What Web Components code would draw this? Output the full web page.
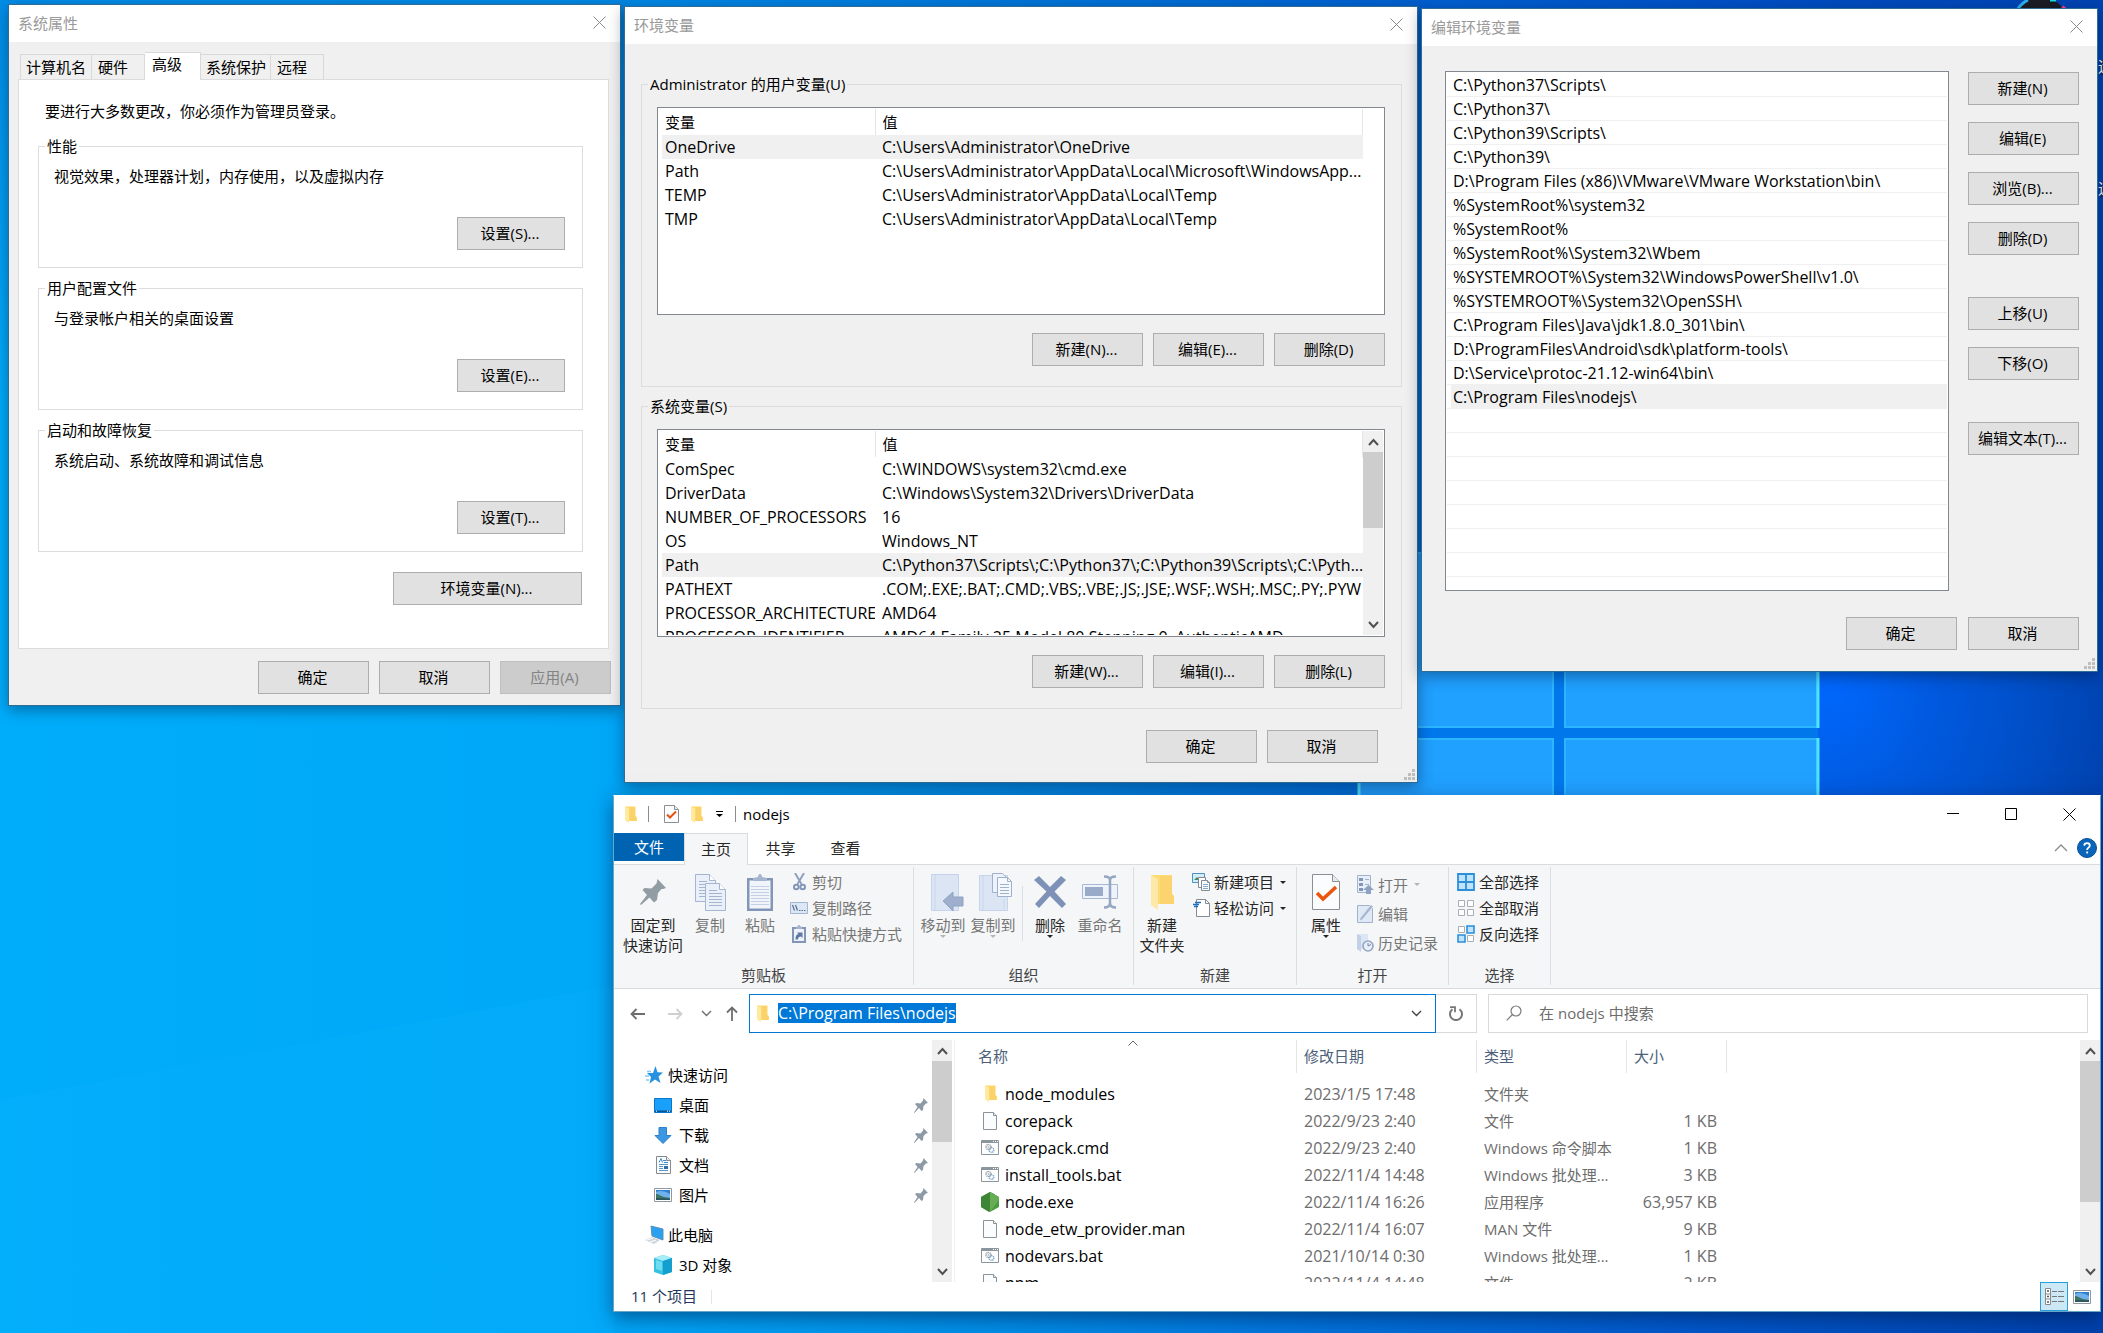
<!DOCTYPE html>
<html lang="zh-CN">
<head>
<meta charset="utf-8">
<title>nodejs</title>
<style>
html, body { margin: 0; height: 100%; }
body { font: 15px/20px "Open Sans", "Noto Sans CJK SC", sans-serif; color: #000; overflow: hidden; }
</style>
</head>
<body>
<desk-top>
  <desk-label style="top:56px">远程</desk-label>
  <desk-label style="top:178px">远程</desk-label>

  <win-dialog caption="系统属性" style="left:8px;top:4px;width:613px">
    <system-properties></system-properties>
  </win-dialog>

  <win-dialog caption="环境变量" grip style="left:624px;top:6px;width:794px">
    <env-variables></env-variables>
  </win-dialog>

  <win-dialog caption="编辑环境变量" grip style="left:1421px;top:8px;width:677px">
    <env-editor></env-editor>
  </win-dialog>

  <file-explorer></file-explorer>
</desk-top>

<script>
/* ---------- icons ---------- */
const paper = (x, y, w, h, c, f = 4) => `<path d="M${x} ${y}h${w - f}l${f} ${f}v${h - f}h${-w}z" fill="#fbfcfd" stroke="${c}"/><path d="M${x + w - f} ${y}v${f}h${f}" fill="#e6eaee" stroke="${c}"/>`;
const win = `<path d="M.5 1.5h17v14H.5z" fill="#fff" stroke="#8b959c"/><path d="M.5 2h17v2H.5z" fill="#8b959c"/><path d="M12 2.500h1m1 0h1m1 0h1" stroke="#fff"/><circle cx="7.500" cy="8" r="2.500" fill="none" stroke="#8e979d" stroke-width="1.500" stroke-dasharray="1 .6"/><circle cx="10.500" cy="11" r="2.300" fill="none" stroke="#7da7c6" stroke-width="1.500" stroke-dasharray="1 .6"/><circle cx="7.500" cy="8" r="1" fill="#b9c2c8"/>`;
const pic = `<path d="M.5 .5h17v13H.5z" fill="#fff" stroke="#8f989e"/><path d="M2 2h14v10H2z" fill="#6fb1ea"/><path d="M2 4c4-2 9-1 14 2v-4H2z" fill="#2f7fd0"/><path d="M2 6c3 0 4 2 8 3l6 1v2H2z" fill="#3f7362"/><path d="M2 10l14 .5V12H2z" fill="#2b5560"/>`;
const ICONS = {
  close: [13, 13, '<path d="M.5 .5l12 12M12.500 .5l-12 12" stroke="currentColor" fill="none"/>'],
  min: [12, 12, '<path d="M0 5.500h12" stroke="currentColor"/>'],
  max: [12, 12, '<path d="M.5 .5h11v11H.5z" stroke="currentColor" fill="none"/>'],
  down: [11, 7, '<path d="M1 1l4.500 4.500L10 1" stroke="currentColor" stroke-width="1.400" fill="none"/>'],
  scrollUp: [11, 8, '<path d="M1 7l4.500-5L10 7" stroke="currentColor" stroke-width="2" fill="none"/>'],
  scrollDown: [11, 8, '<path d="M1 1l4.500 5L10 1" stroke="currentColor" stroke-width="2" fill="none"/>'],
  sort: [10, 6, '<path d="M.5 5.500L5 1l4.500 4.500" stroke="currentColor" fill="none"/>'],
  collapse: [14, 8, '<path d="M1 7l6-6 6 6" stroke="currentColor" stroke-width="1.300" fill="none"/>'],
  caret: [6, 3, '<path d="M0 0h6L3 3z" fill="currentColor"/>'],
  custom: [7, 6, '<path d="M0 .5h7" stroke="#000"/><path d="M0 3h7L3.500 6z" fill="#000"/>'],
  back: [15, 12, '<path d="M15 6H1.500M6.500 1L1.500 6l5 5" stroke="currentColor" stroke-width="1.800" fill="none"/>'],
  forward: [15, 12, '<path d="M0 6h13.500M8.500 1l5 5-5 5" stroke="currentColor" stroke-width="1.800" fill="none"/>'],
  upArrow: [12, 15, '<path d="M6 15V1.500M1 6.500l5-5 5 5" stroke="currentColor" stroke-width="1.800" fill="none"/>'],
  refresh: [14, 15, '<path d="M10.500 3.200A6 6 0 1 1 3.500 3.200" stroke="#777" stroke-width="2" fill="none"/><path d="M1 1.200h5v5" stroke="#777" stroke-width="1.800" fill="none"/>'],
  search: [16, 16, '<circle cx="10" cy="6" r="5" fill="none" stroke="#7b7b7b" stroke-width="1.200"/><path d="M6.500 9.500L.7 15.300" stroke="#7b7b7b" stroke-width="1.200"/>'],
  grip: [11, 11, '<path d="M8 0h3v3H8zM4 4h3v3H4zM8 4h3v3H8zM0 8h3v3H0zM4 8h3v3H4zM8 8h3v3H8z" fill="#bfbfbf"/>'],
  help: [20, 20, '<circle cx="10" cy="10" r="9.500" fill="#0a64ba" stroke="#084f93"/><path d="M7.200 7.600c.2-3.300 5.600-3.200 5.600 0 0 2-2.700 2.200-2.700 4.400" fill="none" stroke="#fff" stroke-width="1.800"/><path d="M9.200 13.500h1.900v1.900H9.200z" fill="#fff"/>'],
  folder: [13, 17, '<path d="M1 .5h10.500v9.500l1.500 1.500V15H5z" fill="#ffd868"/><path d="M1 .5l4 2V17l-4-2.500z" fill="#ffeaa3"/><path d="M6 1h5v9l1 1.500V15H6z" fill="#fbd16a"/>'],
  props: [15, 18, paper(.5, .5, 14, 17, '#8b8f94', 4) + '<path d="M3 9.500l3 3 6-6" stroke="#e8500f" stroke-width="2" fill="none"/>'],
  pin: [26, 26, '<path d="M17.500 0L26 9l-3 1-1.500 0-3.500 4-1 7-3 2.500-4.500-5L1 26l-1-1 7-9-4.500-5 2-2 7 .500 5-5z" fill="#919ca3"/>'],
  pinSmall: [14, 15, '<path d="M9.500 0L14 5l-2 .500-2.500 2.500-.5 4-1.500 1-2.500-3L.500 15 0 14.500l3.500-5.500-2.500-3 1.500-1 4 .500 2.500-3z" fill="#8d9aa6"/>'],
  copy: [31, 37, ((g) => g(0, 0) + g(10, 9))((x, y) => `<path d="M${x + .5} ${y + .5}h14l6 6v21h-20z" fill="#eaf0fa" stroke="#a5b5d0"/><path d="M${x + 14.5} ${y + .5}v6h6" fill="#fff" stroke="#a5b5d0"/><path d="M${x + 4} ${y + 7.5}h8m-8 3h13m-13 3h13m-13 3h13m-13 3h13m-13 3h13" stroke="#a5b5d0"/>`)],
  paste: [26, 37, '<path d="M0 4h26v33H0z" fill="#8296b8"/><path d="M2.500 6.500h21v28h-21z" fill="#f1f5fb"/><path d="M4 12.500h18M4 15.500h18M4 18.500h18M4 21.500h18M4 24.500h18M4 27.500h18M4 30.500h18" stroke="#c5d0e4"/><path d="M6 7V4l5-1c0-4 4-4 4 0l5 1v3z" fill="#a6b5cf"/>'],
  cut: [13, 18, '<path d="M2 0l6.500 11M11 0L4.500 11" stroke="#8fa1bf" stroke-width="2" fill="none"/><circle cx="3.300" cy="14" r="2.300" fill="none" stroke="#8296b8" stroke-width="2"/><circle cx="9.700" cy="14" r="2.300" fill="none" stroke="#8296b8" stroke-width="2"/>'],
  path: [18, 12, '<path d="M.5 .5h17v11H.5z" fill="#dce7f6" stroke="#a5b5d0"/><path d="M2.500 3l2 5.500M5.500 3l2 5.500M9 8.500h1.500m1 0H13m1 0h1.500" stroke="#56708f" stroke-width="1.200"/>'],
  link: [14, 18, '<path d="M0 2h14v16H0z" fill="#8296b8"/><path d="M2 4h10v12H2z" fill="#eef3fb"/><path d="M4 4V2l2-1c0-2 2-2 2 0l2 1v2z" fill="#a6b5cf"/><path d="M3.500 14.500c0-4 1-5 3-5.500L5 7.500h5.500V13L9 11.500c-2 0-3 1-3 3z" fill="#5f78a3"/>'],
  moveTo: [41, 37, '<g transform="translate(8)"><path d="M.5 .5h27v36H.5z" fill="#dbe5f4" stroke="#c6d3e8"/><path d="M4 1v35" stroke="#c9d6ea"/><path d="M12 27l10-9v5h10v9H22v5z" fill="#9dafcc" stroke="#8fa3c3"/></g>'],
  copyTo: [40, 38, '<g transform="translate(6)"><path d="M.5 2.500h28v35H.5z" fill="#dbe5f4" stroke="#c6d3e8"/><path d="M4 3v34M25 26v10" stroke="#c9d6ea"/><path d="M13.500 .5h10l4 4v15h-14z" fill="#eef3fb" stroke="#9fb0cd"/><path d="M18.500 4.500h10l4 4v15h-14z" fill="#f5f8fd" stroke="#9fb0cd"/><path d="M28.500 4.500v4h4M21 11.500h9m-9 3h9m-9 3h9m-9 3h9" stroke="#9fb0cd" fill="none"/></g>'],
  del: [32, 32, '<path d="M5 0l11 11L27 0l5 4-11.500 11.500L32 28l-4 4-12-12L5 32l-4-4 11.500-12.500L0 4z" fill="#7e92b7"/>'],
  rename: [36, 34, '<path d="M.5 9.500h35v14H.500z" fill="#edf2fb" stroke="#a9b8d3"/><path d="M3 12h18v9H3z" fill="#9aabc9"/><path d="M22 1.500c4 0 6 1 6 3.500v23c0 3-2 4.500-6 4.500M34 1.500c-4 0-6 1-6 3.500v23c0 3 2 4.500 6 4.500" stroke="#94a6c4" stroke-width="2.500" fill="none"/>'],
  bigFolder: [25, 35, '<path d="M1 0h21v19l2 2v8H8z" fill="#ffdb74"/><path d="M1 0l7 4v31l-7-5z" fill="#ffe9a6"/><path d="M10 1h12v18l2 3v7H10z" fill="#fbd36f"/>'],
  newItem: [18, 18, '<path d="M.5 .5h12v9H.500z" fill="#d6ecfa" stroke="#4c93c4"/><path d="M2 7l3-3 3 3z" fill="#3f8f64"/>' + '<path d="M6.500 4.500h7v10h-7z" fill="#fff" stroke="#858b90"/>' + paper(9.5, 7.5, 8, 10, '#858b90', 2) + '<path d="M11 11.500h5m-5 2h5m-5 2h5" stroke="#7fa9d8"/>'],
  easy: [17, 18, '<path d="M3.500 .500h9l4 4v13h-13z" fill="#fff" stroke="#858b90"/><path d="M12.500 .500v4h4" fill="none" stroke="#858b90"/><path d="M2 3.500h6M0 5.500h6M1 7.500h4" stroke="#1c6fb8" stroke-width="1.300"/>'],
  bigProps: [29, 37, paper(.5, .5, 27, 35, '#8b8f94', 7) + '<path d="M5 19l6 6 13-12" stroke="#ea560d" stroke-width="3.500" fill="none"/>'],
  open: [17, 19, '<path d="M.5 .500h13v17H.500z" fill="#e9eff9" stroke="#a3b2cc"/><path d="M2 3h4v3H2zM2 8h4v3H2zM2 13h4v3H2z" fill="#8296b8"/><path d="M8 4.500h4m-4 5h4" stroke="#a3b2cc"/><path d="M11.500 10l5.500 5h-3v4H9v-4H6z" fill="#8fa2c2"/>'],
  edit: [17, 18, '<path d="M.5 .500h12l3 3v14H.500z" fill="#dfe8f5" stroke="#a3b2cc"/><path d="M16 1.500L5 14.500l-2 1 .500-2.500L14 0z" fill="#a7b7d2"/>'],
  history: [18, 19, '<path d="M1 1h11v15H5z" fill="#dbe5f4"/><path d="M1 1l4 2v16l-4-3z" fill="#c3d1e7"/><circle cx="12" cy="13" r="5" fill="#e9eff9" stroke="#93a5c4" stroke-width="1.600"/><path d="M12 10v3l3-1.500" stroke="#6f86ae" fill="none"/>'],
  selAll: [18, 18, '<path d="M1 1h16v16H1zM9 1v16M1 9h16" fill="#bfe3fb" stroke="#2c8fdc" stroke-width="1.800"/>'],
  selNone: [18, 18, '<path d="M1.500 1.500h6v6h-6zM10.500 1.500h6v6h-6zM1.500 10.500h6v6h-6zM10.500 10.500h6v6h-6z" fill="#fff" stroke="#a9aeb3"/>'],
  selInv: [18, 18, '<path d="M1.500 1.500h6v6h-6zM10.500 10.500h6v6h-6z" fill="#fff" stroke="#a9aeb3"/><path d="M10 1h7v7h-7zM1 10h7v7H1z" fill="#bfe3fb" stroke="#2c8fdc" stroke-width="1.600"/>'],
  star: [18, 18, '<path d="M10.500 0l2 6.200 5.500.3-4.500 4 2 6.500-5.500-3.500-5.500 4 1.500-6.500-4-4h6z" fill="#2492e0"/><path d="M2 5.500h4M0 10h4M1 14h3" stroke="#8cc8f2" stroke-width="1.300"/>'],
  desktop: [18, 15, '<path d="M.5 .500h17v14H.500z" fill="#18a0fb" stroke="#0b76c9"/><path d="M1 12.500h16v1.500H1z" fill="#075795"/><path d="M2 13.200h1m10 0h1m1 0h1" stroke="#fff"/>'],
  download: [18, 17, '<path d="M5 .5h7.500v8H17L9 16.500 1 8.500h4z" fill="#3b97e3" stroke="#2c7fc8"/>'],
  doc: [15, 18, paper(.5, .5, 14, 17, '#858b90', 4) + '<path d="M3 6.500l2-4 1.500 4M7 4.500h3m-2 2h4" stroke="#3b8bd0" fill="none"/><path d="M3 8.500h9M3 10.500h4m-4 2h4m-4 2h9" stroke="#5b96c4"/><path d="M8 10h4v3H8z" fill="#2f6ea4"/>'],
  pictures: [18, 14, pic],
  pc: [20, 20, '<path d="M6 1l12 3v11L7 11z" fill="#2aa0ee" stroke="#5c93b8"/><path d="M0 15l7-3 8 3-6 4z" fill="#cfd6db"/><path d="M2 15l6-2m-3 4l6-2" stroke="#fff"/>'],
  cube: [18, 20, '<path d="M0 3l9-3 9 3v14l-9 3-9-3z" fill="#35c3e0"/><path d="M0 3l9 3 9-3-9-3z" fill="#a8ecf7"/><path d="M9 6l9-3v14l-9 3z" fill="#159fce"/><path d="M2 5l6 2v9l-6-2z" fill="#6fdcf0"/>'],
  file: [15, 18, paper(.5, .5, 13, 17, '#8b9298', 3)],
  script: [18, 17, win],
  node: [18, 20, '<path d="M9 0l9 5v10l-9 5-9-5V5z" fill="#4d9a41"/><path d="M9 0l5 2.500L8 20 0 15V5z" fill="#3d8636"/><path d="M9 0l9 5v3L9 20z" fill="#66ad55"/>'],
  details: [19, 17, '<path d="M.5 .500h5v16h-5zM.5 6h5M.500 11h5" fill="#fff" stroke="#888"/><path d="M2 3h2M2 8.500h2M2 14h2" stroke="#555" stroke-width="1.500"/><path d="M7 3.500h5m1 0h6M7 8.500h5m1 0h6M7 13.500h5m1 0h6" stroke="#777"/>']
};

function define(name, css, html, setup) {
  const template = document.createElement('template');
  customElements.define(name, class extends HTMLElement {
    connectedCallback() {
      if (this.shadowRoot) return;
      const root = this.attachShadow({ mode: 'open' });
      template.innerHTML = `<style>*{box-sizing:border-box}${css}</style>${typeof html === 'function' ? html(this) : html}`;
      root.append(template.content.cloneNode(true));
      if (setup) setup(root, this);
    }
  });
}

define('ui-icon', ':host{display:inline-flex;flex:none}svg{display:block}', el => {
  const [w, h, body] = ICONS[el.getAttribute('name')];
  return `<svg width="${w}" height="${h}" viewBox="0 0 ${w} ${h}" aria-hidden="true">${body}</svg>`;
});

define('push-button', `
  :host{display:inline-flex;width:111px;height:33px;flex:none}
  button{flex:1;font:inherit;color:#000;background:#e1e1e1;border:1px solid #adadad;padding:0 2px 2px 0;white-space:nowrap}
  button:disabled{background:#ccc;border-color:#bfbfbf;color:#838383}`,
  el => `<button type="button" ${el.hasAttribute('disabled') ? 'disabled' : ''}><slot></slot></button>`);

define('scroll-bar', `
  :host{display:flex;flex-direction:column;justify-content:space-between;width:20px;flex:none;background:#f0f0f0;color:#505050}
  button{height:21px;border:0;padding:0;background:none;color:inherit;display:grid;place-items:center}
  .track{flex:1}.thumb{height:var(--thumb);background:#cdcdcd}`,
  '<button type="button" aria-label="向上"><ui-icon name="scrollUp"></ui-icon></button><div class="track"><div class="thumb"></div></div><button type="button" aria-label="向下"><ui-icon name="scrollDown"></ui-icon></button>');

define('desk-label', ':host{position:absolute;right:-25px;color:#fff;text-shadow:1px 1px 2px #000;white-space:nowrap}', '<slot></slot>');

define('desk-top', `
  :host{display:block;position:relative;width:100%;height:100vh;overflow:hidden;background:
    radial-gradient(circle at 1830px 690px,rgba(0,104,255,.95) 0,rgba(0,98,245,.6) 110px,rgba(0,80,220,0) 300px),
    linear-gradient(180deg,rgba(0,70,190,.3) 0,rgba(0,80,200,0) 30%),
    linear-gradient(90deg,#00adfb 0,#00a8f8 28%,#008ee8 47%,#0074dc 62%,#0058cc 80%,#0041ac 100%)}
  .wall{position:absolute;inset:0}`,
  `<svg class="wall" width="100%" height="100%" aria-hidden="true">
    <path d="M0 1100L614 985V1333H0z" fill="#19b8ff" opacity=".13"/>
    <path d="M1359 553h459v366h-459z" fill="#0078ec"/>
    <g fill="#20a0ff" stroke="#2bb6ff" stroke-width="2"><path d="M1359 553h194v174h-194zM1565 553h252v174h-252zM1359 739h194v180h-194zM1565 739h252v180h-252z"/></g>
    <path d="M1818 552v176m0 10v180M1359 738v180" stroke="#4fe4ff" stroke-width="3"/>
    <circle cx="2041" cy="24" r="27" fill="#1b1b22"/><path d="M2016 12a27 27 0 0 1 12-12" stroke="#29b2f4" stroke-width="3" fill="none"/><path d="M2062 7l5 4" stroke="#ff3e8f" stroke-width="4"/><path d="M2050 0h6" stroke="#17e0e0" stroke-width="3"/>
  </svg><slot></slot>`);

define('win-dialog', `
  :host{position:absolute;display:flex;flex-direction:column;background:#f0f0f0;border:1px solid #2f6d94;box-shadow:0 4px 14px rgba(0,20,50,.42);box-sizing:border-box}
  header{display:flex;justify-content:space-between;align-items:center;height:37px;padding:0 14px 2px 9px;background:#fff;color:#999}
  h2{font:inherit;margin:0}
  header button{border:0;padding:0;background:none;color:#8a8a8a;display:grid}
  .grip{position:absolute;right:2px;bottom:2px}`,
  el => `<header><h2>${el.getAttribute('caption')}</h2><button type="button" aria-label="关闭"><ui-icon name="close"></ui-icon></button></header><slot></slot>${el.hasAttribute('grip') ? '<ui-icon class="grip" name="grip"></ui-icon>' : ''}`);

define('group-box', `
  :host{display:block}
  fieldset{margin:0;padding:0;border:1px solid #dcdcdc;min-width:0}
  legend{margin-left:6px;padding:0 2px}`,
  el => `<fieldset><legend>${el.getAttribute('caption')}</legend><slot></slot></fieldset>`);

const settings = (title, text, key) => `<group-box caption="${title}"><div class="setting"><p>${text}</p><push-button>设置(${key})...</push-button></div></group-box>`;
define('system-properties', `
  :host{display:block;padding:10px 9px 11px 9px}
  nav{display:flex;align-items:flex-end;height:27px;padding-left:2px}
  nav button{font:inherit;height:25px;padding:0 4px 0 5px;border:1px solid #d9d9d9;border-left-width:0;border-bottom:0;background:#f0f0f0;text-align:left;white-space:nowrap}
  nav button:first-child{border-left-width:1px;padding-right:5px}
  nav .wide{padding:0 16px 0 6px}
  nav .on{height:28px;margin-bottom:-1px;background:#fff;padding:0 18px 5px 7px;position:relative}
  section{display:flex;flex-direction:column;margin-right:2px;padding:21px 25px 43px 19px;background:#fff;border:1px solid #dcdcdc}
  p{margin:0}.lead{padding:0 7px 15px}
  .groups{display:flex;flex-direction:column;gap:10px}
  .setting{display:flex;flex-direction:column;gap:31px;padding:10px 17px 17px 15px}
  .setting push-button{width:108px;align-self:flex-end}
  .env{width:189px;align-self:flex-end;margin:20px 1px 0 0}
  footer{display:flex;justify-content:flex-end;gap:10px;padding-top:12px}`,
  `<nav><button type="button">计算机名</button><button type="button" class="wide">硬件</button><button type="button" class="on">高级</button><button type="button">系统保护</button><button type="button" class="wide">远程</button></nav>
  <section><p class="lead">要进行大多数更改，你必须作为管理员登录。</p>
  <div class="groups">${settings('性能', '视觉效果，处理器计划，内存使用，以及虚拟内存', 'S')}${settings('用户配置文件', '与登录帐户相关的桌面设置', 'E')}${settings('启动和故障恢复', '系统启动、系统故障和调试信息', 'T')}</div>
  <push-button class="env">环境变量(N)...</push-button></section>
  <footer><push-button>确定</push-button><push-button>取消</push-button><push-button disabled>应用(A)</push-button></footer>`);

const VARS = {
  user: { selected: 0, rows: [
    ['OneDrive', 'C:\\Users\\Administrator\\OneDrive'],
    ['Path', 'C:\\Users\\Administrator\\AppData\\Local\\Microsoft\\WindowsApp...'],
    ['TEMP', 'C:\\Users\\Administrator\\AppData\\Local\\Temp'],
    ['TMP', 'C:\\Users\\Administrator\\AppData\\Local\\Temp']] },
  system: { selected: 4, rows: [
    ['ComSpec', 'C:\\WINDOWS\\system32\\cmd.exe'],
    ['DriverData', 'C:\\Windows\\System32\\Drivers\\DriverData'],
    ['NUMBER_OF_PROCESSORS', '16'],
    ['OS', 'Windows_NT'],
    ['Path', 'C:\\Python37\\Scripts\\;C:\\Python37\\;C:\\Python39\\Scripts\\;C:\\Pyth...'],
    ['PATHEXT', '.COM;.EXE;.BAT;.CMD;.VBS;.VBE;.JS;.JSE;.WSF;.WSH;.MSC;.PY;.PYW'],
    ['PROCESSOR_ARCHITECTURE', 'AMD64'],
    ['PROCESSOR_IDENTIFIER', 'AMD64 Family 25 Model 80 Stepping 0, AuthenticAMD']] }
};
define('variable-list', `
  :host{display:flex;height:208px;background:#fff;border:1px solid #828790;padding:1px 1px 1px 4px}
  .view{flex:1;overflow:hidden}
  table{table-layout:fixed;width:100%;border-collapse:collapse}
  th,td{font-weight:400;text-align:left;padding:0 0 0 3px;white-space:nowrap;overflow:hidden}
  th{height:26px;border-right:1px solid #e5e5e5}td{height:24px;font-size:16px}
  th:first-child{width:213px}
  th+th,td+td{padding-left:7px}
  .sel{background:#f0f0f0}
  .blank{width:20px}scroll-bar{--thumb:76px}`,
  el => {
    const { selected, rows } = VARS[el.getAttribute('source')];
    return `<div class="view"><table><thead><tr><th scope="col">变量</th><th scope="col">值</th></tr></thead><tbody>${rows.map((r, i) => `<tr${i === selected ? ' class="sel"' : ''}><td>${r[0]}</td><td>${r[1]}</td></tr>`).join('')}</tbody></table></div>${el.hasAttribute('scroll') ? '<scroll-bar></scroll-bar>' : '<div class="blank"></div>'}`;
  });

define('env-variables', `
  :host{display:flex;flex-direction:column;gap:9px;padding:30px 15px 19px 16px}
  .box{display:flex;flex-direction:column;gap:18px;padding:13px 16px 20px 15px}
  .row{display:flex;justify-content:flex-end;gap:10px}
  .end{padding:12px 24px 0 0}`,
  `<group-box caption="Administrator 的用户变量(U)"><div class="box"><variable-list source="user"></variable-list><div class="row"><push-button>新建(N)...</push-button><push-button>编辑(E)...</push-button><push-button>删除(D)</push-button></div></div></group-box>
  <group-box caption="系统变量(S)"><div class="box"><variable-list source="system" scroll></variable-list><div class="row"><push-button>新建(W)...</push-button><push-button>编辑(I)...</push-button><push-button>删除(L)</push-button></div></div></group-box>
  <div class="row end"><push-button>确定</push-button><push-button>取消</push-button></div>`);

const PATHS = ['C:\\Python37\\Scripts\\', 'C:\\Python37\\', 'C:\\Python39\\Scripts\\', 'C:\\Python39\\', 'D:\\Program Files (x86)\\VMware\\VMware Workstation\\bin\\', '%SystemRoot%\\system32', '%SystemRoot%', '%SystemRoot%\\System32\\Wbem', '%SYSTEMROOT%\\System32\\WindowsPowerShell\\v1.0\\', '%SYSTEMROOT%\\System32\\OpenSSH\\', 'C:\\Program Files\\Java\\jdk1.8.0_301\\bin\\', 'D:\\ProgramFiles\\Android\\sdk\\platform-tools\\', 'D:\\Service\\protoc-21.12-win64\\bin\\', 'C:\\Program Files\\nodejs\\'];
define('env-editor', `
  :host{display:flex;flex-direction:column;gap:26px;padding:25px 18px 21px 23px}
  main{display:flex;gap:19px}
  .list{flex:1;height:520px;padding:1px;border:1px solid #828790;background:#fff}
  ul{list-style:none;margin:0;padding:0;height:100%;background:repeating-linear-gradient(#fff 0 23px,#f0f0f0 23px 24px)}
  li{height:24px;line-height:24px;font-size:16px;margin-left:4px;padding-left:2px;white-space:nowrap}
  .sel{background:#f0f0f0}
  .side{display:flex;flex-direction:column;gap:17px;padding-top:1px}
  .far{margin-top:25px}
  footer{display:flex;justify-content:flex-end;gap:11px}`,
  `<main><div class="list"><ul>${PATHS.map((p, i) => `<li${i === PATHS.length - 1 ? ' class="sel"' : ''}>${p}</li>`).join('')}</ul></div>
  <div class="side"><push-button>新建(N)</push-button><push-button>编辑(E)</push-button><push-button>浏览(B)...</push-button><push-button>删除(D)</push-button><push-button class="far">上移(U)</push-button><push-button>下移(O)</push-button><push-button class="far">编辑文本(T)...</push-button></div></main>
  <footer><push-button>确定</push-button><push-button>取消</push-button></footer>`);

/* ---------- explorer ---------- */
define('ribbon-group', `
  :host{display:flex;flex-direction:column;justify-content:space-between;border-right:1px solid #dcdfe2;box-sizing:border-box}
  .body{display:flex;align-items:flex-start;padding-left:var(--pad)}
  .name{text-align:center;color:#444}`,
  el => `<div class="body"><slot></slot></div><div class="name">${el.getAttribute('caption')}</div>`);

define('ribbon-large', `
  :host{display:block;flex:none;width:50px}
  button{width:100%;border:0;background:none;font:inherit;color:#262626;padding:5px 0 0;display:flex;flex-direction:column;align-items:center;white-space:nowrap}
  button:disabled{color:#767676}
  .pic{height:40px;display:grid;place-items:center;margin-bottom:3px}
  .caret{color:#262626}button:disabled .caret{color:#b5b5b5}`,
  el => `<button type="button" ${el.hasAttribute('off') ? 'disabled' : ''}><span class="pic"><ui-icon name="${el.getAttribute('icon')}"></ui-icon></span><slot></slot>${el.hasAttribute('menu') ? '<ui-icon class="caret" name="caret"></ui-icon>' : ''}</button>`);

define('ribbon-small', `
  :host{display:block}
  button{border:0;background:none;font:inherit;color:#262626;height:var(--row,26px);padding:0;display:flex;align-items:center;white-space:nowrap}
  button:disabled{color:#767676}
  .pic{width:18px;display:grid;place-items:center;margin-right:4px}
  .caret{margin-left:6px}button:disabled .caret{color:#b5b5b5}`,
  el => `<button type="button" ${el.hasAttribute('off') ? 'disabled' : ''}><span class="pic"><ui-icon name="${el.getAttribute('icon')}"></ui-icon></span><slot></slot>${el.hasAttribute('menu') ? '<ui-icon class="caret" name="caret"></ui-icon>' : ''}</button>`);

define('explorer-ribbon', `
  :host{display:flex;height:125px;padding:2px 0 3px;background:#f5f6f7;border:solid #dadbdc;border-width:1px 0}
  .stack{display:flex;flex-direction:column;padding-top:2px}
  .gap{padding-left:5px}
  .tall{--row:29px;padding:3px 0 0 5px}
  .sep{width:1px;height:55px;margin:19px 2px 0 4px;background:#dcdfe2}
  .clip{width:300px;--pad:7px}.org{width:220px;--pad:4px}.new{width:163px;--pad:3px}.open{width:152px;--pad:4px}.pick{width:102px;--pad:8px}
  .w64{width:64px}`,
  `<ribbon-group class="clip" caption="剪贴板"><ribbon-large class="w64" icon="pin">固定到<br>快速访问</ribbon-large><ribbon-large off icon="copy">复制</ribbon-large><ribbon-large off icon="paste">粘贴</ribbon-large><div class="stack gap"><ribbon-small off icon="cut">剪切</ribbon-small><ribbon-small off icon="path">复制路径</ribbon-small><ribbon-small off icon="link">粘贴快捷方式</ribbon-small></div></ribbon-group>
  <ribbon-group class="org" caption="组织"><ribbon-large off menu icon="moveTo">移动到</ribbon-large><ribbon-large off menu icon="copyTo">复制到</ribbon-large><div class="sep"></div><ribbon-large menu icon="del">删除</ribbon-large><ribbon-large off icon="rename">重命名</ribbon-large></ribbon-group>
  <ribbon-group class="new" caption="新建"><ribbon-large icon="bigFolder">新建<br>文件夹</ribbon-large><div class="stack gap"><ribbon-small menu icon="newItem">新建项目</ribbon-small><ribbon-small menu icon="easy">轻松访问</ribbon-small></div></ribbon-group>
  <ribbon-group class="open" caption="打开"><ribbon-large menu icon="bigProps">属性</ribbon-large><div class="stack tall"><ribbon-small off menu icon="open">打开</ribbon-small><ribbon-small off icon="edit">编辑</ribbon-small><ribbon-small off icon="history">历史记录</ribbon-small></div></ribbon-group>
  <ribbon-group class="pick" caption="选择"><div class="stack"><ribbon-small icon="selAll">全部选择</ribbon-small><ribbon-small icon="selNone">全部取消</ribbon-small><ribbon-small icon="selInv">反向选择</ribbon-small></div></ribbon-group>`);

define('nav-item', `
  :host{display:block}
  a{display:flex;align-items:center;height:30px;padding:0 4px 0 31px;color:#000;text-decoration:none}
  .pic{width:18px;display:grid;place-items:center;margin-right:5px}
  .sub{padding-left:40px}.sub .pic{margin-right:7px}
  .pin{margin-left:auto}`,
  el => `<a href="#" class="${el.hasAttribute('sub') ? 'sub' : ''}"><span class="pic"><ui-icon name="${el.getAttribute('icon')}"></ui-icon></span><slot></slot>${el.hasAttribute('pinned') ? '<ui-icon class="pin" name="pinSmall"></ui-icon>' : ''}</a>`);

const FILES = [
  ['folder', 'node_modules', '2023/1/5 17:48', '文件夹', ''],
  ['file', 'corepack', '2022/9/23 2:40', '文件', '1 KB'],
  ['script', 'corepack.cmd', '2022/9/23 2:40', 'Windows 命令脚本', '1 KB'],
  ['script', 'install_tools.bat', '2022/11/4 14:48', 'Windows 批处理...', '3 KB'],
  ['node', 'node.exe', '2022/11/4 16:26', '应用程序', '63,957 KB'],
  ['file', 'node_etw_provider.man', '2022/11/4 16:07', 'MAN 文件', '9 KB'],
  ['script', 'nodevars.bat', '2021/10/14 0:30', 'Windows 批处理...', '1 KB'],
  ['file', 'npm', '2022/11/4 14:48', '文件', '2 KB']];
define('file-list', `
  :host{display:block;position:relative;flex:1;overflow:hidden}
  table{table-layout:fixed;width:100%;border-collapse:collapse;color:#6d6d6d}
  th,td{font-weight:400;text-align:left;padding:0;white-space:nowrap;overflow:hidden}
  th{height:40px;vertical-align:top;color:#4c607a}
  th div{height:33px;padding:6px 0 0 7px;border-right:1px solid #e5e5e5}
  th:first-child div{padding-left:23px}
  th:last-child div{border:0}
  td{height:27px;padding-left:7px}
  td:first-child{padding-left:26px}
  .name{display:flex;align-items:center;gap:6px;color:#000;font-size:16px}
  .pic{width:18px;height:20px;display:grid;place-items:center}
  td.date,td.size{font-size:16px}
  td.size{text-align:right;padding-right:10px}
  .sort{position:absolute;left:173px;top:0;color:#666}`,
  `<table><colgroup><col style="width:342px"><col style="width:180px"><col style="width:150px"><col style="width:100px"><col></colgroup>
  <thead><tr><th scope="col"><div>名称</div></th><th scope="col"><div>修改日期</div></th><th scope="col"><div>类型</div></th><th scope="col"><div>大小</div></th><th><div></div></th></tr></thead>
  <tbody>${FILES.map(([icon, name, date, type, size]) => `<tr><td><span class="name"><span class="pic"><ui-icon name="${icon}"></ui-icon></span>${name}</span></td><td class="date">${date}</td><td>${type}</td><td class="size">${size}</td><td></td></tr>`).join('')}</tbody></table>
  <ui-icon class="sort" name="sort"></ui-icon>`);

define('file-explorer', `
  :host{position:absolute;left:613px;right:2px;top:795px;bottom:21px;display:flex;flex-direction:column;background:#fff;border:1px solid #6aa6c8;border-top-color:#fff;box-sizing:border-box;box-shadow:0 6px 18px rgba(0,20,60,.5)}
  button{font:inherit;border:0;background:none;padding:0}
  .title{display:flex;align-items:center;height:37px;padding:0 24px 1px 10px}
  .title .bar{width:1px;height:16px;background:#8c8c8c;flex:none}
  .quick{display:flex;align-items:center}
  .ctl{display:flex;margin-left:auto;gap:46px}.ctl button{display:grid}
  .tabs{display:flex;height:32px;margin-bottom:-1px;align-items:flex-start;position:relative}
  .tabs button{height:32px;width:65px;color:#262626;padding-bottom:2px}
  .tabs .file{width:70px;height:28px;padding:0;background:#0063b1;color:#fff}
  .tabs .on{width:64px;background:#f5f6f7;border:1px solid #dadbdc;border-bottom:0}
  .tabs .help{display:flex;align-items:center;gap:9px;margin-left:auto;width:auto;padding-right:3px;height:30px;color:#8c8c8c}
  .tabs .help button{width:auto;height:auto;display:grid;color:inherit;padding:0}
  .go{display:flex;align-items:center;padding:5px 12px 7px 16px;color:#6e6e6e}
  .go .nav{display:flex;align-items:center;width:119px;flex:none}
  .go .nav button{display:grid;color:inherit}
  .addr{flex:688 1 0px;display:flex;align-items:center;height:39px;border:1px solid #0078d7;padding:0 13px 1px 6px}
  .addr input{flex:1;min-width:0;margin-left:9px;font:inherit;font-size:16px;line-height:20px;height:20px;padding:0;border:0;outline:0;color:#000;background:none}
  .addr input::selection{background:#0078d7;color:#fff}
  .addr button{display:grid;color:#444}
  .reload{width:41px;height:39px;border:1px solid #d9d9d9!important;border-left:0!important;display:grid;place-items:center}
  .find{flex:600 1 0px;display:flex;align-items:center;height:39px;margin-left:11px;padding:0 0 1px 17px;border:1px solid #d9d9d9}
  .find input{flex:1;min-width:0;margin-left:17px;font:inherit;border:0;outline:0;padding:0;background:none}
  .find input::placeholder{color:#6d6d6d;opacity:1}
  .body{flex:1;display:flex;min-height:0}
  .side{width:318px;padding-top:20px;overflow:hidden}
  .side .far{margin-top:10px}
  .split{width:1px;margin:0 0 0 2px;background:#f0f0f0}
  .s1{--thumb:81px}.s2{--thumb:141px}
  .status{display:flex;align-items:center;height:29px;padding:0 9px 0 17px;color:#1e395b}
  .status span{padding-bottom:2px}
  .status i{width:1px;height:14px;margin-left:14px;background:#e5e5e5}
  .view{display:grid;place-items:center}
  .view.on{margin-left:auto;width:28px;height:29px;background:#cce8f6;border:1px solid #26a0da;margin-right:5px}`,
  `<div class="title"><div class="quick"><ui-icon name="folder"></ui-icon><div class="bar" style="margin:0 15px 0 11px"></div><ui-icon name="props"></ui-icon><ui-icon name="folder" style="margin:0 13px 0 11px"></ui-icon><ui-icon name="custom"></ui-icon><div class="bar" style="margin:0 7px 0 12px"></div></div><span>nodejs</span>
    <div class="ctl"><button type="button" aria-label="最小化"><ui-icon name="min"></ui-icon></button><button type="button" aria-label="最大化"><ui-icon name="max"></ui-icon></button><button type="button" aria-label="关闭"><ui-icon name="close"></ui-icon></button></div></div>
  <div class="tabs"><button type="button" class="file">文件</button><button type="button" class="on">主页</button><button type="button">共享</button><button type="button">查看</button><div class="help"><button type="button" aria-label="折叠功能区"><ui-icon name="collapse"></ui-icon></button><button type="button" aria-label="帮助"><ui-icon name="help"></ui-icon></button></div></div>
  <explorer-ribbon></explorer-ribbon>
  <div class="go"><div class="nav"><button type="button" aria-label="后退"><ui-icon name="back"></ui-icon></button><button type="button" aria-label="前进" style="margin-left:23px;color:#d0d0d0"><ui-icon name="forward"></ui-icon></button><button type="button" aria-label="最近" style="margin-left:18px"><ui-icon name="down"></ui-icon></button><button type="button" aria-label="上移" style="margin-left:14px"><ui-icon name="upArrow"></ui-icon></button></div>
    <div class="addr"><ui-icon name="folder"></ui-icon><input aria-label="地址" value="C:\\Program Files\\nodejs"><button type="button" aria-label="展开"><ui-icon name="down"></ui-icon></button></div><button type="button" class="reload" aria-label="刷新"><ui-icon name="refresh"></ui-icon></button>
    <div class="find"><ui-icon name="search"></ui-icon><input type="text" aria-label="搜索" placeholder="在 nodejs 中搜索"></div></div>
  <div class="body"><div class="side"><nav-item icon="star">快速访问</nav-item><nav-item sub pinned icon="desktop">桌面</nav-item><nav-item sub pinned icon="download">下载</nav-item><nav-item sub pinned icon="doc">文档</nav-item><nav-item sub pinned icon="pictures">图片</nav-item><nav-item class="far" icon="pc">此电脑</nav-item><nav-item sub icon="cube">3D 对象</nav-item></div><scroll-bar class="s1"></scroll-bar><div class="split"></div><file-list></file-list><scroll-bar class="s2"></scroll-bar></div>
  <div class="status"><span>11 个项目</span><i></i><button type="button" class="view on" aria-label="详细信息"><ui-icon name="details"></ui-icon></button><button type="button" class="view" aria-label="大图标"><ui-icon name="pictures"></ui-icon></button></div>`,
  root => { const input = root.querySelector('.addr input'); input.focus(); input.select(); });
</script>
</body>
</html>
